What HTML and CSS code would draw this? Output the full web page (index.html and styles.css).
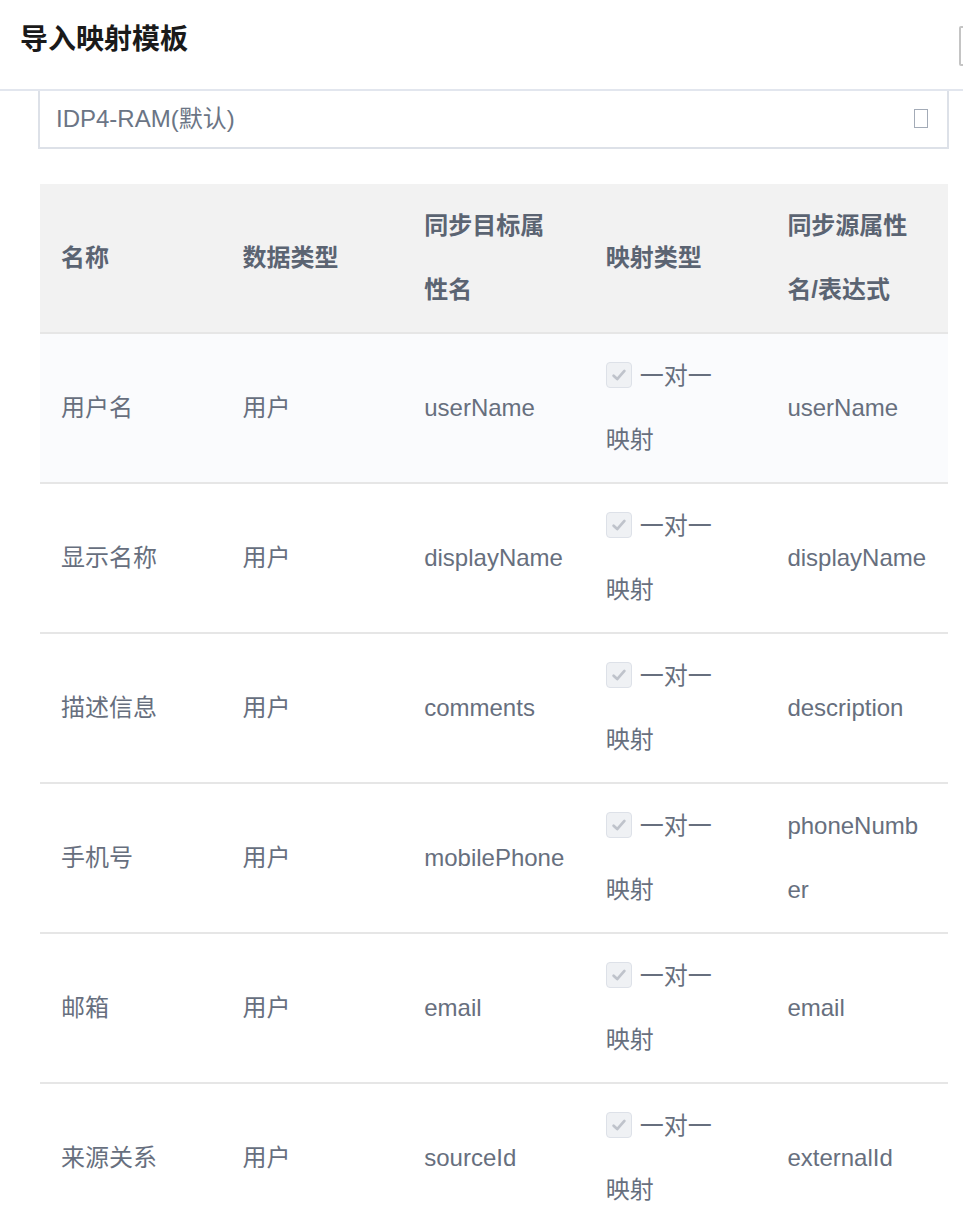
FILE: index.html
```html
<!DOCTYPE html>
<html lang="zh-CN">
<head>
<meta charset="utf-8">
<title>导入映射模板</title>
<link rel="stylesheet" href="styles.css">
</head>
<body>
<div class="header">
  <h1 class="title">导入映射模板</h1>
  <span class="close-box"></span>
</div>
<div class="content">
  <div class="select">
    <span class="select-text">IDP4-RAM(默认)</span>
    <span class="select-icon"></span>
  </div>
  <table class="map-table">
    <thead>
      <tr>
        <th>名称</th>
        <th>数据类型</th>
        <th>同步目标属性名</th>
        <th>映射类型</th>
        <th>同步源属性名/表达式</th>
      </tr>
    </thead>
    <tbody>
      <tr class="hover">
        <td>用户名</td><td>用户</td><td>userName</td>
        <td><div class="map-type"><span class="cb"><svg viewBox="0 0 16 16" width="18" height="18"><path d="M3.2 8.6 L6.4 11.6 L12.8 4.4" fill="none" stroke="#bfc3cb" stroke-width="2.4" stroke-linecap="round" stroke-linejoin="round"/></svg></span>一对一映射</div></td>
        <td>userName</td>
      </tr>
      <tr>
        <td>显示名称</td><td>用户</td><td>displayName</td>
        <td><div class="map-type"><span class="cb"><svg viewBox="0 0 16 16" width="18" height="18"><path d="M3.2 8.6 L6.4 11.6 L12.8 4.4" fill="none" stroke="#bfc3cb" stroke-width="2.4" stroke-linecap="round" stroke-linejoin="round"/></svg></span>一对一映射</div></td>
        <td>displayName</td>
      </tr>
      <tr>
        <td>描述信息</td><td>用户</td><td>comments</td>
        <td><div class="map-type"><span class="cb"><svg viewBox="0 0 16 16" width="18" height="18"><path d="M3.2 8.6 L6.4 11.6 L12.8 4.4" fill="none" stroke="#bfc3cb" stroke-width="2.4" stroke-linecap="round" stroke-linejoin="round"/></svg></span>一对一映射</div></td>
        <td>description</td>
      </tr>
      <tr>
        <td>手机号</td><td>用户</td><td>mobilePhone</td>
        <td><div class="map-type"><span class="cb"><svg viewBox="0 0 16 16" width="18" height="18"><path d="M3.2 8.6 L6.4 11.6 L12.8 4.4" fill="none" stroke="#bfc3cb" stroke-width="2.4" stroke-linecap="round" stroke-linejoin="round"/></svg></span>一对一映射</div></td>
        <td>phoneNumber</td>
      </tr>
      <tr>
        <td>邮箱</td><td>用户</td><td>email</td>
        <td><div class="map-type"><span class="cb"><svg viewBox="0 0 16 16" width="18" height="18"><path d="M3.2 8.6 L6.4 11.6 L12.8 4.4" fill="none" stroke="#bfc3cb" stroke-width="2.4" stroke-linecap="round" stroke-linejoin="round"/></svg></span>一对一映射</div></td>
        <td>email</td>
      </tr>
      <tr>
        <td>来源关系</td><td>用户</td><td>sourceId</td>
        <td><div class="map-type"><span class="cb"><svg viewBox="0 0 16 16" width="18" height="18"><path d="M3.2 8.6 L6.4 11.6 L12.8 4.4" fill="none" stroke="#bfc3cb" stroke-width="2.4" stroke-linecap="round" stroke-linejoin="round"/></svg></span>一对一映射</div></td>
        <td>externalId</td>
      </tr>
    </tbody>
  </table>
</div>
</body>
</html>
```

FILE: styles.css
```css
html, body {
  margin: 0;
  padding: 0;
  background: #ffffff;
  overflow: hidden;
}
body {
  font-family: "Liberation Sans", "Noto Sans CJK SC", sans-serif;
  color: #646e7d;
}
.header {
  height: 80px;
  padding: 0 0 9px 20px;
  border-bottom: 2px solid #e2e6ee;
  display: flex;
  align-items: center;
  justify-content: space-between;
  overflow: hidden;
}
.title {
  margin: 0;
  font-size: 28px;
  font-weight: bold;
  color: #1a1a1a;
  line-height: 36px;
}
.close-box {
  width: 30px;
  height: 36px;
  border: 2px solid #c4c4c4;
  border-radius: 2px;
  margin-right: -30px;
  margin-top: 12px;
  flex: none;
}
.content {
  padding: 0 14px 0 38px;
}
.select {
  height: 50px;
  border: 2px solid #dde1e8;
  border-top: none;
  display: flex;
  align-items: center;
  justify-content: space-between;
  padding: 0 19px 6px 16px;
}
.select-text {
  font-size: 24px;
  color: #6b7585;
}
.select-icon {
  width: 12px;
  height: 17px;
  border: 1.5px solid #a3abb7;
  margin-top: 4px;
}
.map-table {
  margin: 35px 1px 0 2px;
  width: 908px;
  border-collapse: collapse;
  table-layout: fixed;
}
.map-table th,
.map-table td {
  width: 20%;
  padding: 10px 19px 10px 21px;
  line-height: 64px;
  font-size: 24px;
  text-align: left;
  vertical-align: middle;
  word-break: break-all;
  border-bottom: 2px solid #e6e6e6;
}
.map-table th {
  background: #f2f2f2;
  color: #5b6472;
  font-weight: bold;
}
.map-table td {
  color: #676f7e;
  font-weight: normal;
}
.map-table tr.hover td {
  background: #fafbfd;
}
.map-type {
  max-width: 120px;
}
.cb {
  display: inline-flex;
  align-items: center;
  justify-content: center;
  width: 24px;
  height: 24px;
  border: 1.5px solid #dde1e8;
  border-radius: 4px;
  background: #eff1f4;
  vertical-align: middle;
  margin-right: 8px;
  position: relative;
  top: -3px;
}
.cb svg {
  display: block;
}
```
